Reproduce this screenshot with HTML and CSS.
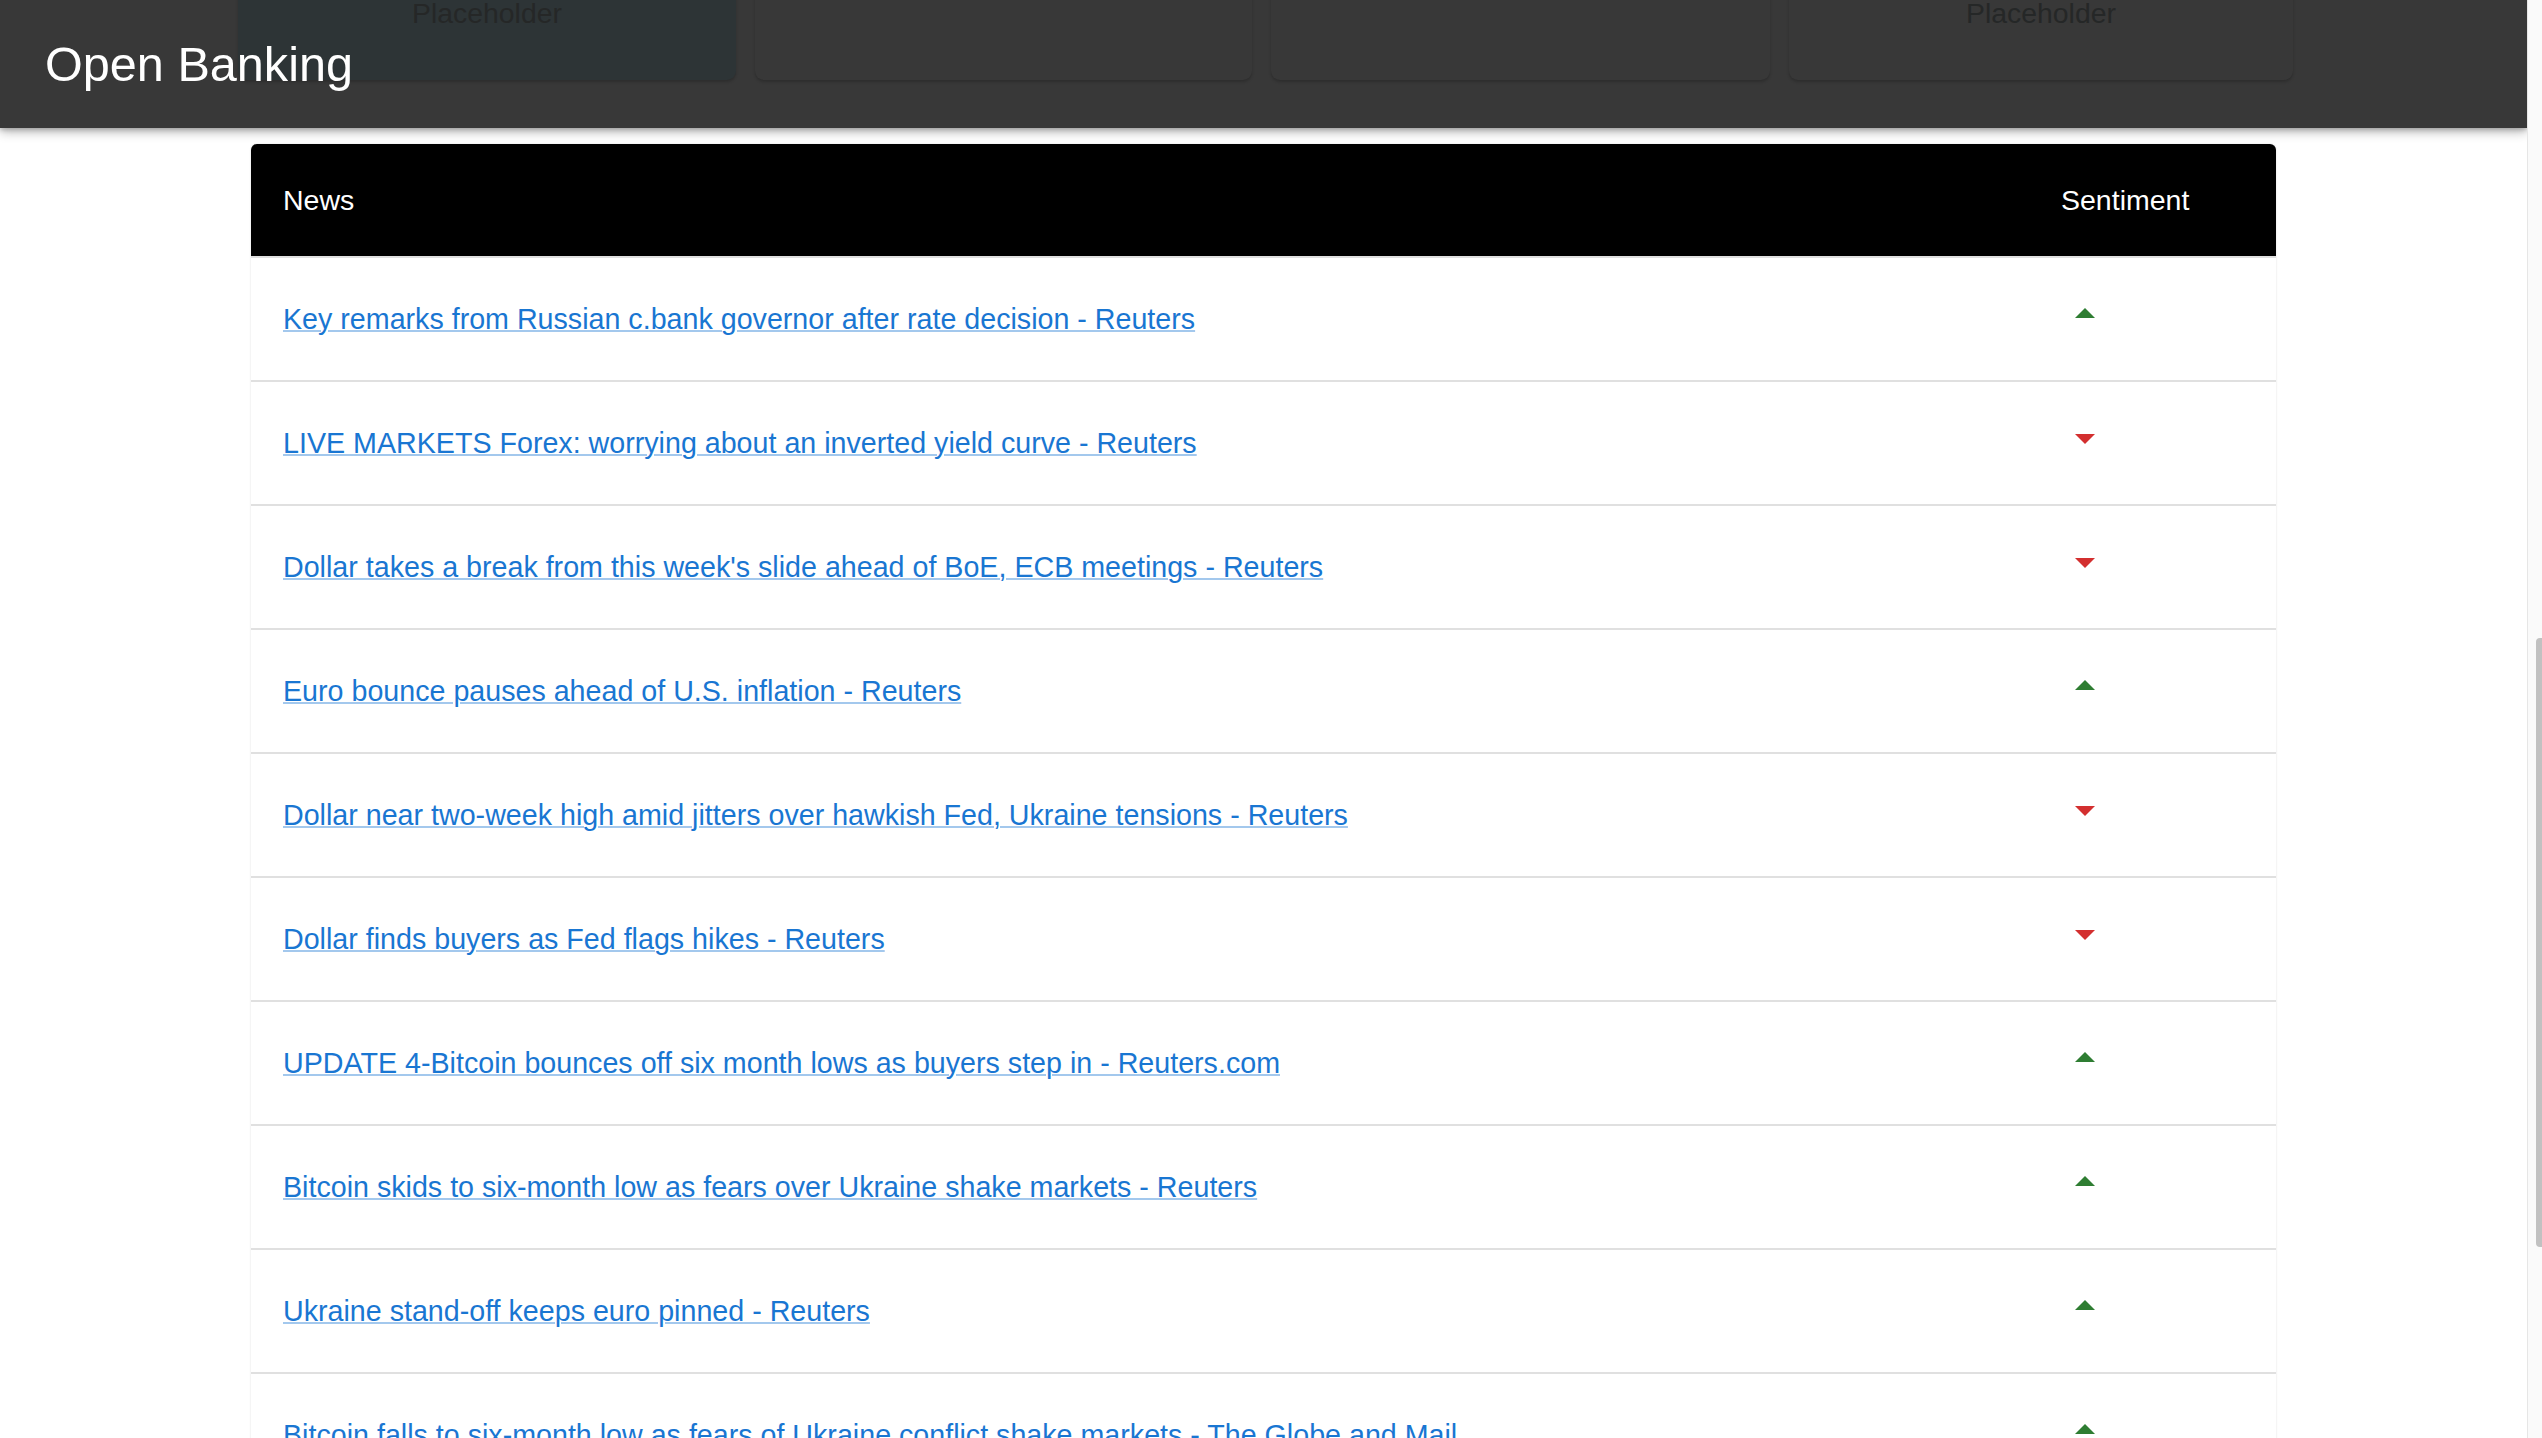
FILE: index.html
```html
<!DOCTYPE html>
<html lang="en">
<head>
<meta charset="utf-8">
<title>Open Banking</title>
<link rel="stylesheet" href="styles.css">
</head>
<body>
<div class="page">
  <main class="main">
    <header class="appbar">
      <div class="cards">
        <div class="card card-teal"><span class="card-label">Placeholder</span></div>
        <div class="card"></div>
        <div class="card"></div>
        <div class="card"><span class="card-label">Placeholder</span></div>
      </div>
      <h1 class="title">Open Banking</h1>
    </header>
    <section class="table">
      <div class="row head">
        <div class="cell news">News</div>
        <div class="cell senti">Sentiment</div>
      </div>
      <div class="row">
        <div class="cell news"><a href="#" class="link">Key remarks from Russian c.bank governor after rate decision - Reuters</a></div>
        <div class="cell senti"><svg class="icon up" viewBox="0 0 24 24"><path d="M7 14l5-5 5 5z"/></svg></div>
      </div>
      <div class="row">
        <div class="cell news"><a href="#" class="link">LIVE MARKETS Forex: worrying about an inverted yield curve - Reuters</a></div>
        <div class="cell senti"><svg class="icon down" viewBox="0 0 24 24"><path d="M7 10l5 5 5-5z"/></svg></div>
      </div>
      <div class="row">
        <div class="cell news"><a href="#" class="link">Dollar takes a break from this week's slide ahead of BoE, ECB meetings - Reuters</a></div>
        <div class="cell senti"><svg class="icon down" viewBox="0 0 24 24"><path d="M7 10l5 5 5-5z"/></svg></div>
      </div>
      <div class="row">
        <div class="cell news"><a href="#" class="link">Euro bounce pauses ahead of U.S. inflation - Reuters</a></div>
        <div class="cell senti"><svg class="icon up" viewBox="0 0 24 24"><path d="M7 14l5-5 5 5z"/></svg></div>
      </div>
      <div class="row">
        <div class="cell news"><a href="#" class="link">Dollar near two-week high amid jitters over hawkish Fed, Ukraine tensions - Reuters</a></div>
        <div class="cell senti"><svg class="icon down" viewBox="0 0 24 24"><path d="M7 10l5 5 5-5z"/></svg></div>
      </div>
      <div class="row">
        <div class="cell news"><a href="#" class="link">Dollar finds buyers as Fed flags hikes - Reuters</a></div>
        <div class="cell senti"><svg class="icon down" viewBox="0 0 24 24"><path d="M7 10l5 5 5-5z"/></svg></div>
      </div>
      <div class="row">
        <div class="cell news"><a href="#" class="link">UPDATE 4-Bitcoin bounces off six month lows as buyers step in - Reuters.com</a></div>
        <div class="cell senti"><svg class="icon up" viewBox="0 0 24 24"><path d="M7 14l5-5 5 5z"/></svg></div>
      </div>
      <div class="row">
        <div class="cell news"><a href="#" class="link">Bitcoin skids to six-month low as fears over Ukraine shake markets - Reuters</a></div>
        <div class="cell senti"><svg class="icon up" viewBox="0 0 24 24"><path d="M7 14l5-5 5 5z"/></svg></div>
      </div>
      <div class="row">
        <div class="cell news"><a href="#" class="link">Ukraine stand-off keeps euro pinned - Reuters</a></div>
        <div class="cell senti"><svg class="icon up" viewBox="0 0 24 24"><path d="M7 14l5-5 5 5z"/></svg></div>
      </div>
      <div class="row">
        <div class="cell news"><a href="#" class="link">Bitcoin falls to six-month low as fears of Ukraine conflict shake markets - The Globe and Mail</a></div>
        <div class="cell senti"><svg class="icon up" viewBox="0 0 24 24"><path d="M7 14l5-5 5 5z"/></svg></div>
      </div>
    </section>
  </main>
  <div class="scrolltrack"><div class="thumb"></div></div>
</div>
</body>
</html>
```

FILE: styles.css
```css
html, body {
  margin: 0;
  padding: 0;
  height: 1438px;
  overflow: hidden;
  background: #ffffff;
}

body {
  font-family: "Liberation Sans", Arial, Helvetica, sans-serif;
}

.page {
  display: flex;
  height: 1438px;
}

.main {
  flex: 1;
  min-width: 0;
  overflow: hidden;
}

.appbar {
  position: relative;
  height: 128px;
  background: #383838;
  display: flex;
  align-items: center;
  padding-left: 45px;
  box-shadow: 0 4px 10px rgba(0, 0, 0, 0.28), 0 2px 4px rgba(0, 0, 0, 0.18);
  z-index: 2;
}

.cards {
  position: absolute;
  left: 238px;
  top: -40px;
  display: grid;
  grid-template-columns: 498px 497px 499px 504px;
  column-gap: 19px;
  z-index: 0;
}

.card {
  height: 120px;
  background: #383838;
  border-radius: 9px;
  box-shadow: 0 2px 3px rgba(0, 0, 0, 0.2);
  display: flex;
  justify-content: center;
  align-items: flex-start;
}

.card-teal {
  background: #2d3436;
}

.card-label {
  padding-top: 32px;
  font-size: 28.4px;
  line-height: 42px;
  color: #252727;
}

.title {
  position: relative;
  z-index: 1;
  margin: 0;
  font-weight: 400;
  font-size: 48.6px;
  line-height: 1;
  color: #ffffff;
}

.table {
  width: 2025px;
  margin: 16px auto 0;
  background: #ffffff;
  border-radius: 6px 6px 0 0;
  box-shadow: 0 0 2px rgba(0, 0, 0, 0.16);
}

.row {
  display: grid;
  grid-template-columns: 1fr 215px;
  height: 122px;
  border-bottom: 2px solid #e0e0e0;
}

.row.head {
  height: 112px;
  background: #000000;
  border-radius: 6px 6px 0 0;
  color: #ffffff;
}

.cell {
  display: flex;
  align-items: center;
  font-size: 28.5px;
}

.news {
  padding-left: 32px;
}

.link {
  color: #1976d2;
  font-size: 28.65px;
  text-decoration: underline;
  text-decoration-color: rgba(25, 118, 210, 0.4);
  text-decoration-thickness: 2px;
  white-space: nowrap;
}

.icon {
  width: 48px;
  height: 48px;
  margin-bottom: 10px;
}

.icon.up {
  fill: #2e7d32;
}

.icon.down {
  fill: #d32f2f;
}

.scrolltrack {
  width: 14px;
  flex: none;
  background: #fafafa;
  border-left: 1px solid #e6e6e6;
  padding-top: 638px;
  display: flex;
  justify-content: flex-end;
}

.thumb {
  width: 6px;
  height: 609px;
  background: #c1c1c1;
  border-radius: 4px 0 0 4px;
}
```
